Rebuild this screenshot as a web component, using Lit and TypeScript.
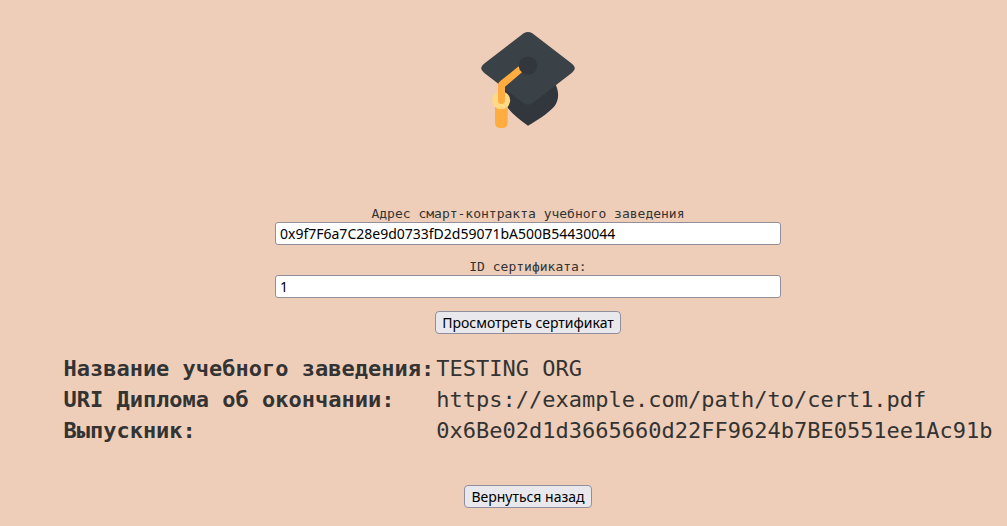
import { LitElement, css, html } from "lit";
import { customElement, state } from "lit/decorators.js";

@customElement("graduation-cap")
export class GraduationCap extends LitElement {
  static styles = css`
    :host {
      display: block;
      width: 96px;
      height: 96px;
    }
    .cap {
      display: block;
      width: 100%;
      height: 100%;
    }
  `;

  render() {
    return html`
      <svg class="cap" viewBox="36 36 288 288" aria-hidden="true">
        <path
          fill="#31373d"
          d="M108 200L262 192C274 216 273 240 260 258C238 283 207 301 180 317C155 299 134 283 118 262Z"
        />
        <path
          fill="#3b4247"
          d="M167 40Q180 32 193 40L312 131Q329 145 312 158L194 249Q180 260 166 249L48 158Q31 145 48 131Z"
        />
        <circle cx="180" cy="137" r="27.5" fill="#31373d" />
        <path
          fill="#ffac40"
          d="M81 244H119V306Q119 324 103 324H97Q81 324 81 306Z"
        />
        <circle cx="99.5" cy="241" r="27" fill="#ffd983" />
        <path
          fill="#ffac40"
          d="M152 139Q153 150 162 157L111 200V241Q111 252 100 252Q90 252 90 241V196Q90 189 96 184Z"
        />
      </svg>
    `;
  }
}

@customElement("app-root")
export class AppRoot extends LitElement {
  static styles = css`
    :host {
      display: block;
      box-sizing: border-box;
      min-height: 100vh;
      padding: 32px 0 18px 49px;
      background: #eeceb9;
      color: #333;
      font: 13px/17px "DejaVu Sans Mono", monospace;
    }
    .page,
    .form {
      display: flex;
      flex-direction: column;
      align-items: center;
    }
    .form {
      width: 100%;
      margin-top: 77px;
      gap: 13px;
    }
    .field {
      display: flex;
      flex-direction: column;
      width: 53%;
      max-width: 506px;
      text-align: center;
    }
    .input,
    .button {
      box-sizing: border-box;
      height: 23px;
      border: 1px solid #8f8f9d;
      color: #000;
      font: 14px/19px "Noto Sans", sans-serif;
    }
    .input {
      width: 100%;
      padding: 0 4px;
      border-radius: 3px;
      background: #fff;
    }
    .button {
      padding: 0 6px;
      border-radius: 4px;
      background: #e9e9ed;
    }
    .details {
      margin: 19px 0 39px;
      border-collapse: collapse;
      font-size: 22px;
      line-height: 31px;
      white-space: nowrap;
    }
    .name,
    .value {
      padding: 0;
      text-align: left;
    }
    .name {
      padding-right: 2px;
      font-weight: 700;
    }
    .value {
      font-weight: 400;
    }
  `;

  @state() private contract = "0x9f7F6a7C28e9d0733fD2d59071bA500B54430044";
  @state() private certificateId = "1";

  private details = [
    ["Название учебного заведения:", "TESTING ORG"],
    ["URI Диплома об окончании:", "https://example.com/path/to/cert1.pdf"],
    ["Выпускник:", "0x6Be02d1d3665660d22FF9624b7BE0551ee1Ac91b"],
  ];

  render() {
    return html`
      <main class="page">
        <graduation-cap></graduation-cap>
        <form class="form" @submit=${(e: Event) => e.preventDefault()}>
          <div class="field">
            <label for="contract">Адрес смарт-контракта учебного заведения</label>
            <input
              class="input"
              id="contract"
              type="text"
              .value=${this.contract}
              @input=${(e: Event) => (this.contract = (e.target as HTMLInputElement).value)}
            />
          </div>
          <div class="field">
            <label for="certificate">ID сертификата:</label>
            <input
              class="input"
              id="certificate"
              type="text"
              .value=${this.certificateId}
              @input=${(e: Event) => (this.certificateId = (e.target as HTMLInputElement).value)}
            />
          </div>
          <button class="button" type="submit">Просмотреть сертификат</button>
        </form>
        <table class="details">
          <tbody>
            ${this.details.map(
              ([name, value]) => html`
                <tr>
                  <th class="name" scope="row">${name}</th>
                  <td class="value">${value}</td>
                </tr>
              `,
            )}
          </tbody>
        </table>
        <button class="button" type="button">Вернуться назад</button>
      </main>
    `;
  }
}
